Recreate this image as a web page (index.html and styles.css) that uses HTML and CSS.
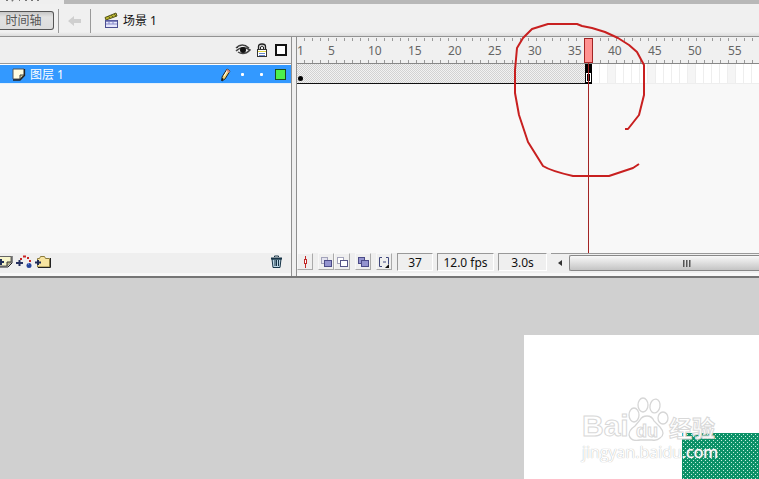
FILE: index.html
```html
<!DOCTYPE html>
<html lang="zh-CN">
<head>
<meta charset="utf-8">
<title>时间轴</title>
<link rel="stylesheet" href="styles.css">
</head>
<body>
<div class="tabs"><span class="tab"><svg width="64" height="4" viewBox="0 0 64 4"><path d="M6 0h2M12 0l1 1M19 0h1M25 0h2M32 0v1M37 0h2" stroke="#777" stroke-width="2"/></svg></span></div>
<header class="toolbar">
  <button class="timeline-btn">时间轴</button>
  <span class="sep"></span>
  <button class="back" aria-label="返回"><svg width="14" height="12" viewBox="0 0 14 12"><path d="M0 6l6-5v3h7v4H6v3z" fill="#cfcfcf"/></svg></button>
  <span class="sep"></span>
  <a class="scene" href="#stage"><svg width="15" height="17" viewBox="0 0 15 17"><path d="M1 5.500L12 1l1 3L2 8z" fill="#bab62c" stroke="#55531a"/><path d="M4 4l2 2M7 3l2 2M10 2l2 2" stroke="#666420"/><rect x="1.500" y="8.500" width="12" height="7" fill="#e5e6fb" stroke="#4c4f91"/><path d="M2 9h11" stroke="#5d60a8" stroke-width="1.500"/><path d="M2 12h11M5 10v2M9 10v2" stroke="#8588c8"/></svg><span>场景 1</span></a>
</header>
<main class="timeline">
  <section class="layers">
    <div class="layer-head">
      <svg class="c-eye" width="16" height="12" viewBox="0 0 16 12"><path d="M1 4Q7-2 14 4M1 7Q7 1 15 6Q9 12 3 8" fill="none" stroke="#444" stroke-width="1.500"/><circle cx="8" cy="6" r="3" fill="#111"/><path d="M2 3l1 1M5 1l1 1M11 1l-1 1" stroke="#333"/></svg>
      <svg class="c-lock" width="12" height="14" viewBox="0 0 12 14"><path d="M2.500 7V3.500Q2.500 1 6 1t3.500 2.500V7" fill="#ddd" stroke="#222" stroke-width="1.300"/><path d="M4.500 7V4Q6 2 7.500 4v3" stroke="#222" fill="#efefef"/><rect x="1.500" y="6.500" width="9" height="7" fill="#fff" stroke="#333"/><path d="M2 8.500h8" stroke="#e0d445"/><path d="M3 10.500h6M3 12.500h6" stroke="#6684c8"/></svg>
      <span class="c-box box-outline"></span>
    </div>
    <div class="layer">
      <svg class="page" width="14" height="13" viewBox="0 0 14 13"><path d="M1 1h11v6l-4 4H1z" fill="#fffde0" stroke="#555"/><path d="M12.500 1v6.500L8 12H1" fill="none" stroke="#222" stroke-width="1.300"/><path d="M8 11V7h4z" fill="#d8d399" stroke="#444"/></svg>
      <span class="layer-name">图层 1</span>
      <svg class="c-pencil" width="12" height="14" viewBox="0 0 12 14"><path d="M2 9L7 1l3 2-5 8-3 2z" fill="#f4d574" stroke="#222"/><path d="M7 1l3 2-1 2-3-2z" fill="#d98b7a"/><path d="M4 8l3-5" stroke="#fff"/><path d="M1 13l1-3 2 1z" fill="#111"/></svg>
      <span class="c-eye dot"></span><span class="c-lock dot"></span><span class="c-box box-green"></span>
    </div>
    <div class="empty"></div>
    <div class="layer-tools">
      <button aria-label="插入图层"><svg width="13" height="14" viewBox="0 0 13 14"><path d="M0 1.500h11v6L7 11H0" fill="#f7f5cb" stroke="#666"/><path d="M12 1v7l-4 4H0" fill="none" stroke="#222"/><path d="M7 11V7h4" fill="#bcb785" stroke="#333"/><path d="M-1 7h5M1 4v6" stroke="#223057" stroke-width="2"/></svg></button>
      <button aria-label="添加引导层"><svg width="16" height="14" viewBox="0 0 16 14"><path d="M4 4h2M7 1.500h3M11 3h2M13 6h2" stroke="#c92525" stroke-width="2"/><path d="M0 8h7M3.500 5v6" stroke="#26305f" stroke-width="2"/><circle cx="13" cy="10.500" r="2.500" fill="#27459b"/><path d="M12 9h1" stroke="#9cb5ff"/></svg></button>
      <button aria-label="插入图层文件夹"><svg width="17" height="14" viewBox="0 0 17 14"><path d="M2.500 12V3.500h2l1-2h4l1 2h4V12z" fill="#f8e5a1" stroke="#8a7a3c"/><path d="M15.500 3v9.500H3" fill="none" stroke="#222"/><path d="M0 7.500h6M3 5v5" stroke="#202b55" stroke-width="2"/></svg></button>
      <button class="trash" aria-label="删除图层"><svg width="13" height="14" viewBox="0 0 13 14"><path d="M2 4l1 8.500h7L11 4z" fill="#bdd7e6" stroke="#173447"/><path d="M1 3.500h11" stroke="#173447" stroke-width="2"/><path d="M4.500 2V1h4v1M5 5v6M6.500 5v6M8.500 5v6" stroke="#173447" fill="none"/></svg></button>
    </div>
  </section>
  <div class="divider"></div>
  <section class="frames">
    <div class="ruler"><span class="first">1</span><span>5</span><span>10</span><span>15</span><span>20</span><span>25</span><span>30</span><span>35</span><span>40</span><span>45</span><span>50</span><span>55</span></div>
    <div class="track"><div class="span"><i class="key"></i></div><div class="end"><i></i></div><div class="ghost"></div></div>
    <div class="empty"></div>
    <div class="playhead"><i></i></div>
    <div class="status">
      <button class="sq" aria-label="滚动到播放头"><svg width="14" height="14" viewBox="0 0 14 14"><path d="M7.500 1v12" stroke="#c22828"/><rect x="6.500" y="4.500" width="2" height="4" fill="#fff" stroke="#c22828"/></svg></button>
      <span class="pair"><button class="sq" aria-label="绘图纸外观"><svg width="14" height="14" viewBox="0 0 14 14"><rect x="2.500" y="2.500" width="6" height="6" fill="#e3e3ef" stroke="#a3a3ba"/><rect x="5.500" y="5.500" width="7" height="6" fill="#9494cf" stroke="#4b4b88"/></svg></button><button class="sq" aria-label="绘图纸外观轮廓"><svg width="14" height="14" viewBox="0 0 14 14"><rect x="2.500" y="2.500" width="6" height="6" fill="#fff" stroke="#a3a3ba"/><rect x="5.500" y="5.500" width="7" height="6" fill="#fff" stroke="#555586"/></svg></button></span>
      <button class="sq" aria-label="编辑多个帧"><svg width="14" height="14" viewBox="0 0 14 14"><rect x="2.500" y="2.500" width="6" height="6" fill="#9494cf" stroke="#4b4b88"/><rect x="5.500" y="5.500" width="7" height="6" fill="#9494cf" stroke="#4b4b88"/></svg></button>
      <button class="sq" aria-label="修改标记"><svg width="14" height="14" viewBox="0 0 14 14"><path d="M5 2.500H2.500v9H5M9 2.500h2.500V9M6 7h3" fill="none" stroke="#3f477d"/><path d="M12 9v4H8z" fill="#111"/></svg></button>
      <output class="now">37</output><output class="fps">12.0 fps</output><output class="time">3.0s</output>
      <div class="scroll"><button aria-label="向左滚动"><svg width="4" height="6" viewBox="0 0 4 6"><path d="M4 0v6L0 3z" fill="#333"/></svg></button><div class="thumb"><svg width="10" height="7" viewBox="0 0 10 7"><path d="M1 .5h2M4 .5h2M7 .5h2" stroke="#333"/><path d="M1.500 0v7M4.500 0v7M7.500 0v7" stroke="#555"/><path d="M2.500 0v7M5.500 0v7M8.500 0v7" stroke="#999"/></svg></div></div>
    </div>
  </section>
</main>
<section class="stage" id="stage"><div class="canvas"><div class="shape"></div></div></section>
<div class="watermark">
  <div class="brand"><span class="bai">Bai</span><svg width="42" height="46" viewBox="0 0 42 46"><g fill="#fff" fill-opacity=".85" stroke="#d6d6d6" stroke-width="1.300"><ellipse cx="7" cy="20" rx="5" ry="7"/><ellipse cx="16" cy="10" rx="5" ry="7"/><ellipse cx="28" cy="11" rx="5" ry="7" transform="rotate(10 28 11)"/><ellipse cx="36" cy="23" rx="5" ry="6"/><path d="M20 21q5 0 7 5l6 6q6 7 0 11-3 3-8 2H13q-9 2-11-5 0-5 6-9l5-6q2-4 7-4z"/></g><text x="20" y="42" text-anchor="middle">du</text></svg><span class="exp">经验</span></div>
  <div class="site">jingyan.baidu.com</div>
</div>
<svg class="mark" width="140" height="162" viewBox="513 17 140 162"><g fill="none" stroke-linejoin="round"><path id="loop" d="M625 129h3l11-14 5-20V65l-7-13-8-7-11-7-13-6-13-4-10-2-5-2h-29l-16 5-9 9-6 10-2 22v23l4 22 9 27 15 24q8 5 30 10h36l24-8 6-4" stroke="#c82020" stroke-width="2"/></g></svg>
</body>
</html>
```
FILE: styles.css
```css
* { box-sizing: border-box; }
body {
  margin: 0;
  min-height: 100vh;
  display: flex;
  flex-direction: column;
  position: relative;
  overflow: hidden;
  background: #efefef;
  font: 12px/16px "Noto Sans", "Noto Sans CJK SC", sans-serif;
  color: #111;
}
button { border: 0; padding: 0; background: none; font: inherit; color: inherit; display: flex; align-items: center; justify-content: center; }
svg { display: block; flex: none; }

.tabs { height: 4px; background: #b8b8b8; }
.tab { display: block; width: 64px; height: 4px; background: #efefef; }
.toolbar { height: 33px; display: flex; align-items: center; padding-top: 1px; border-bottom: 1px solid #929292; background: linear-gradient(#f0f0f0 28px, #dcdcdc); }
.timeline-btn { width: 54px; height: 19px; border: 1px solid #555; border-left: 0; border-radius: 0 3px 3px 0; background: linear-gradient(#c6c6c6, #e2e2e2 5px, #dcdcdc); color: #555; padding-right: 6px; }
.sep { width: 1px; height: 24px; margin: 0 4px; background: #999; }
.back { width: 23px; height: 20px; }
.scene { display: flex; align-items: center; gap: 4px; margin-left: 9px; color: #111; text-decoration: none; }

.timeline { display: flex; height: 241px; border-bottom: 2px solid #757575; }
.layers { flex: 0 0 291px; display: flex; flex-direction: column; }
.layer-head, .layer { display: grid; grid-template-columns: 12px 18px 1fr 15px 19px 19px 19px 1px; align-items: center; justify-items: center; }
.layer-head { height: 27px; border-bottom: 1px solid #999; }
.layer { height: 20px; padding-top: 1px; border-top: 1px solid #fff; border-bottom: 1px solid #e4f0fa; background: #3399ff; color: #fff; }
.page { grid-column: 2; justify-self: start; }
.layer-name { grid-column: 3; justify-self: start; }
.c-pencil { grid-column: 4; }
.c-eye { grid-column: 5; }
.c-lock { grid-column: 6; }
.c-box { grid-column: 7; width: 12px; height: 12px; }
.box-outline { border: 2px solid #111; background: #fff; }
.box-green { width: 11px; height: 11px; border: 1px solid #1b4d1b; background: #4cf04c; }
.dot { width: 3px; height: 3px; border-radius: 1px; background: #fff; }
.empty { flex: 1; background: #f8f8f8; }
.layer-tools { height: 23px; display: flex; gap: 3px; padding-right: 8px; align-items: flex-start; padding-top: 2px; border-bottom: 3px solid #f8f8f8; }
.trash { margin-left: auto; }
.divider { flex: 0 0 6px; border: 1px solid #8f8f8f; border-width: 0 1px; background: #efefef; }

.frames { flex: 1; min-width: 0; display: flex; flex-direction: column; position: relative; overflow: hidden; }
.ruler {
  height: 27px; display: flex; overflow: hidden; border-bottom: 1px solid #888; color: #666; padding-top: 6px;
  background:
    repeating-linear-gradient(90deg, transparent 0 7px, #999 7px 8px) 0 1px / 100% 3px no-repeat,
    repeating-linear-gradient(90deg, transparent 0 7px, #999 7px 8px) 0 23px / 100% 3px no-repeat,
    #f0f0f0;
}
.ruler span { flex: 0 0 40px; }
.ruler .first { flex-basis: 31px; }
.track { height: 20px; display: flex; }
.span { flex: 0 0 288px; position: relative; border-bottom: 1px solid #111; background: repeating-conic-gradient(#d2d2d2 0 25%, #f2f2f2 0 50%) 0 0 / 2px 2px; }
.key { position: absolute; left: 1px; bottom: 2px; width: 5px; height: 5px; border-radius: 50%; background: #000; }
.end { flex: 0 0 7px; background: #000; padding: 9px 1px 2px; }
.end i { display: block; height: 9px; border: 1px solid #fff; }
.ghost { flex: 1; border-bottom: 1px solid #eee; background: repeating-linear-gradient(90deg, transparent 0 7px, #eee 7px 8px), repeating-linear-gradient(90deg, #fff 0 16px, #f5f5f5 16px 24px, #fff 24px 40px); }
.playhead { position: absolute; left: 287px; top: 1px; bottom: 23px; width: 9px; background: linear-gradient(#a32424, #a32424) 4px 0 / 1px 100% no-repeat; }
.playhead i { display: block; height: 25px; border: 1px solid #a32424; background: #ff9292; }
.status { height: 23px; display: flex; align-items: flex-start; border-bottom: 3px solid #f8f8f8; }
.sq { width: 16px; height: 17px; border: 1px solid #f8f8f8; border-right-color: #aaa; border-bottom-color: #aaa; margin-right: 5px; }
.pair { display: flex; margin-right: 5px; }
.pair .sq { margin: 0; }
.status output { height: 18px; padding-top: 1px; border: 1px solid #fff; border-top-color: #999; border-left-color: #999; text-align: center; margin-right: 4px; }
.status .now { width: 36px; }
.fps { width: 57px; }
.time { width: 49px; }
.scroll { flex: 1; min-width: 60px; display: flex; height: 18px; padding-top: 1px; border-top: 1px solid #999; }
.scroll button { width: 18px; }
.thumb { flex: 1; display: flex; align-items: center; justify-content: center; padding-left: 44px; border: 1px solid #888; border-right: 0; border-radius: 2px 0 0 2px; background: linear-gradient(#f8f8f8, #e2e2e2 6px, #c4c4c4); }

.stage { flex: 1; display: flex; background: #d0d0d0; padding: 57px 0 0 524px; min-height: 201px; }
.canvas { flex: 1; display: flex; background: #fff; padding: 98px 0 0 158px; }
.shape {
  flex: 1;
  background:
    conic-gradient(from 90deg at 3px 3px, #c5f0df 25%, transparent 0) 0 0 / 4px 4px,
    conic-gradient(from 90deg at 3px 3px, #c5f0df 25%, transparent 0) 2px 2px / 4px 4px,
    #0c9168;
}
.watermark { position: absolute; left: 582px; top: 395px; color: #fff; }
.brand { display: flex; align-items: flex-end; height: 46px; font-weight: 700; -webkit-text-stroke: 1px #d8d8d8; }
.bai { font: 700 30px/30px "Liberation Sans", sans-serif; width: 45px; }
.brand text { font: 700 18px "Liberation Sans", sans-serif; fill: #fff; stroke: #d8d8d8; }
.exp { font: 700 23px/28px "Noto Sans CJK SC", sans-serif; }
.site { font: 16px/20px "Open Sans", sans-serif; text-shadow: 0 0 1px #bbb, 0 0 1px #ccc; margin-top: 1px; }
.mark { position: absolute; left: 513px; top: 17px; pointer-events: none; }
```
